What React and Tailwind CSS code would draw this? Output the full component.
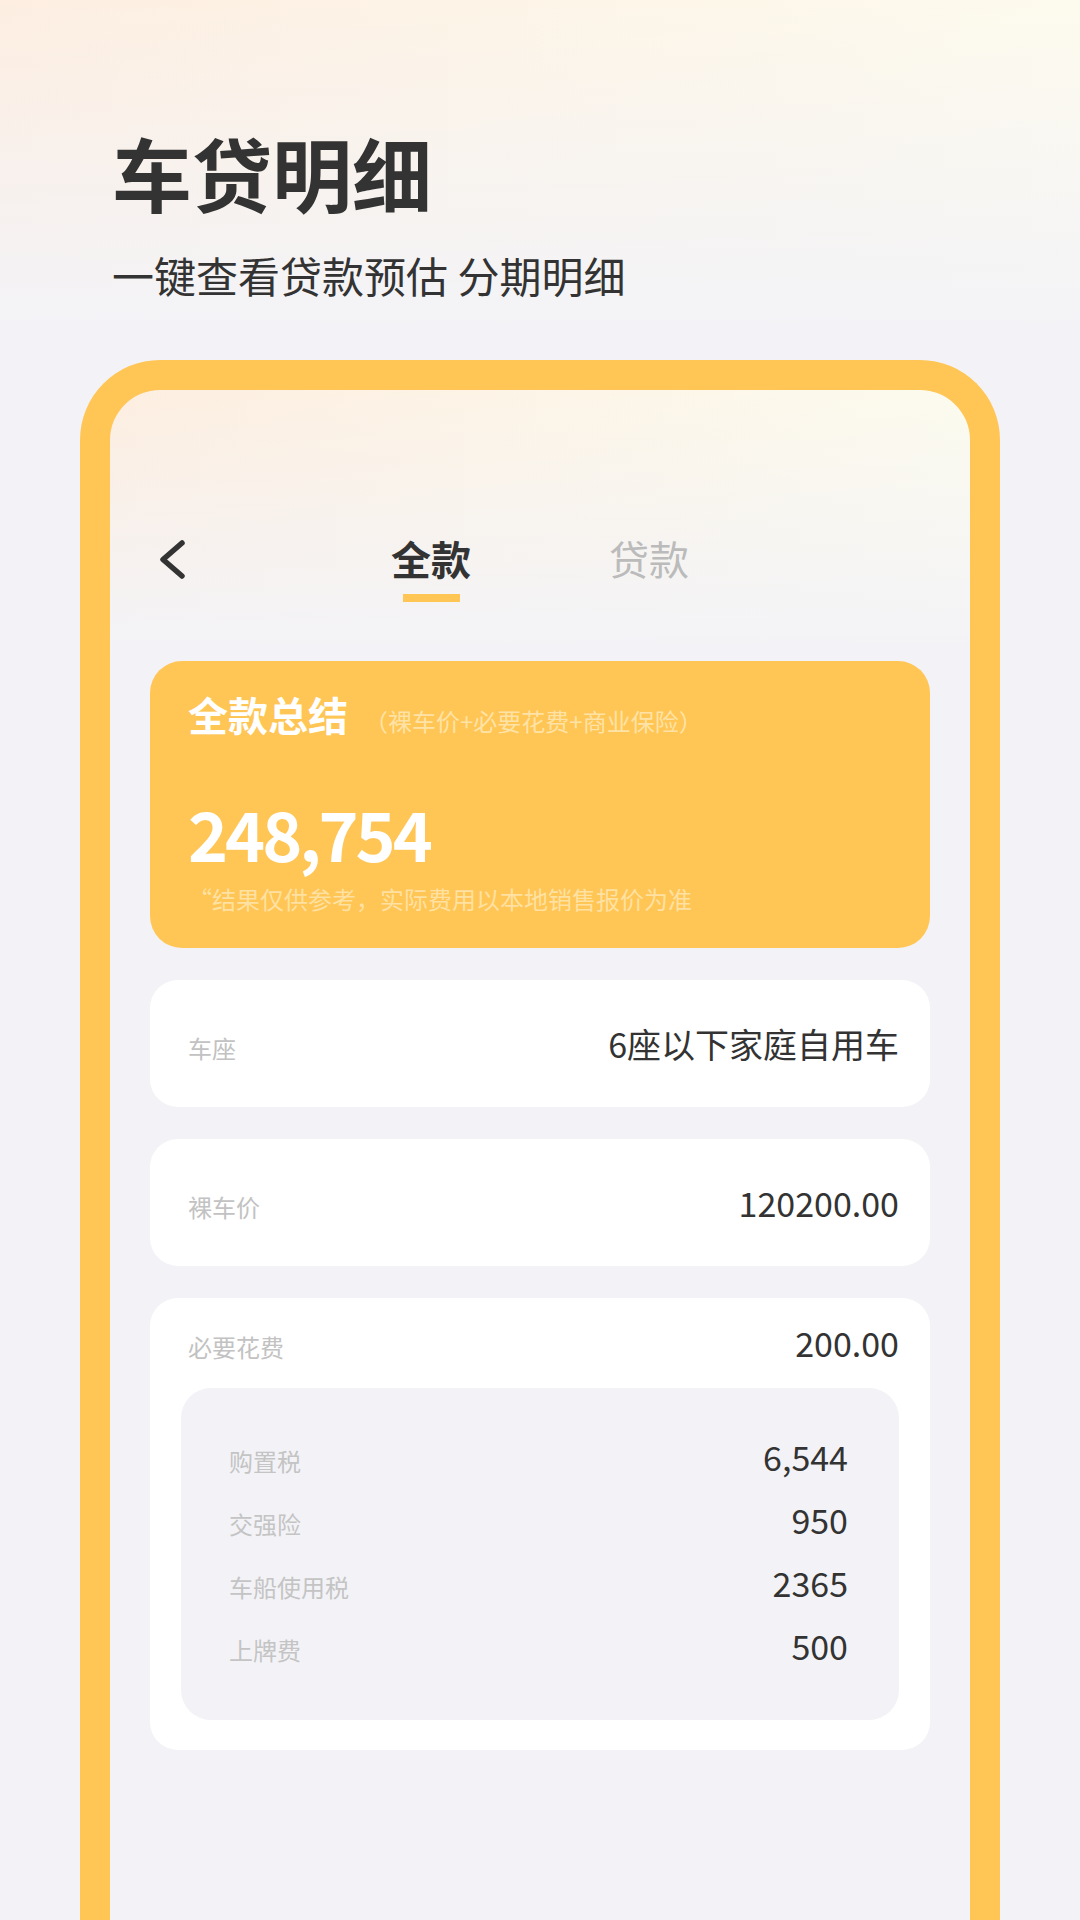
import React from 'react';

const fees = [
    { label: '购置税', value: '6,544' },
    { label: '交强险', value: '950' },
    { label: '车船使用税', value: '2365' },
    { label: '上牌费', value: '500' },
];

// simple label / value card
const InfoCard = ({ label, value }) => (
    <div className="h-[127px] rounded-[28px] bg-white pl-[38px] pr-[31px] flex items-center">
        <div className="flex-1 flex items-baseline justify-between">
            <span className="text-[24px] leading-none text-[#c2c2c2]">{label}</span>
            <span className="text-[34px] leading-none text-[#333333]">{value}</span>
        </div>
    </div>
);

export default function App() {
    return (
        <div className="w-[1080px] h-[1920px] overflow-hidden font-['Noto_Sans_CJK_SC','Noto_Sans',sans-serif] bg-[linear-gradient(180deg,rgba(243,243,247,0)_0px,#f3f3f7_330px),linear-gradient(90deg,#fdeee1_0%,#fdfbee_100%)]">
            {/* Heading */}
            <div className="pt-[131px] pl-[112px]">
                <h1 className="text-[80px] leading-none font-bold text-[#333333]">车贷明细</h1>
                <p className="mt-[43px] text-[42px] leading-none text-[#333333]">一键查看贷款预估 分期明细</p>
            </div>

            {/* Phone frame */}
            <div className="mt-[64px] mx-[80px] h-[1600px] border-[30px] border-b-0 border-[#ffc555] rounded-t-[80px] bg-[linear-gradient(180deg,rgba(243,243,247,0)_0px,#f3f3f7_260px),linear-gradient(90deg,#fdeee0_0%,#fcfbee_100%)]">
                {/* Nav */}
                <div className="pt-[148px] grid grid-cols-[1fr_auto_1fr] items-start">
                    <div className="pl-[46px]">
                        <svg width="30" height="44" viewBox="0 0 30 44" fill="none">
                            <polyline points="26,5 7,21.5 26,38" stroke="#333333" strokeWidth="5.5" strokeLinecap="round" strokeLinejoin="round" />
                        </svg>
                    </div>
                    <div className="flex gap-[138px]">
                        <div className="flex flex-col items-center">
                            <span className="text-[40px] leading-none font-bold text-[#333333]">全款</span>
                            <span className="mt-[16px] w-[57px] h-[8px] bg-[#ffc555]" />
                        </div>
                        <span className="text-[40px] leading-none text-[#bbbbbb]">贷款</span>
                    </div>
                    <div />
                </div>

                <div className="mt-[59px] mx-[40px] flex flex-col gap-[32px]">
                    {/* Summary */}
                    <div className="h-[287px] rounded-[32px] bg-[#ffc555] pt-[33px] pl-[38px]">
                        <div className="flex items-baseline">
                            <span className="text-[40px] leading-none font-bold text-white">全款总结</span>
                            <span className="ml-4 text-[24px] leading-none text-[#ffe3a6]">（裸车价+必要花费+商业保险）</span>
                        </div>
                        <div className="mt-[65px] text-[68px] leading-none font-bold tracking-[-3px] text-white">248,754</div>
                        <div className="mt-[20px] text-[24px] leading-none text-[#ffe1a2]">“结果仅供参考，实际费用以本地销售报价为准</div>
                    </div>

                    <InfoCard label="车座" value="6座以下家庭自用车" />
                    <InfoCard label="裸车价" value="120200.00" />

                    {/* Necessary costs */}
                    <div className="rounded-[28px] bg-white pt-[28px] pb-[30px] px-[31px]">
                        <div className="pl-[7px] flex items-baseline justify-between">
                            <span className="text-[24px] leading-none text-[#c2c2c2]">必要花费</span>
                            <span className="text-[34px] leading-none text-[#333333]">200.00</span>
                        </div>
                        <div className="mt-[28px] rounded-[30px] bg-[#f3f3f7] pt-[52px] pb-[57px] pl-[48px] pr-[51px] flex flex-col gap-[29px]">
                            {fees.map((f) => (
                                <div key={f.label} className="flex items-baseline justify-between">
                                    <span className="text-[24px] leading-none text-[#c4c4c4]">{f.label}</span>
                                    <span className="text-[34px] leading-none text-[#333333]">{f.value}</span>
                                </div>
                            ))}
                        </div>
                    </div>
                </div>
            </div>
        </div>
    );
}
